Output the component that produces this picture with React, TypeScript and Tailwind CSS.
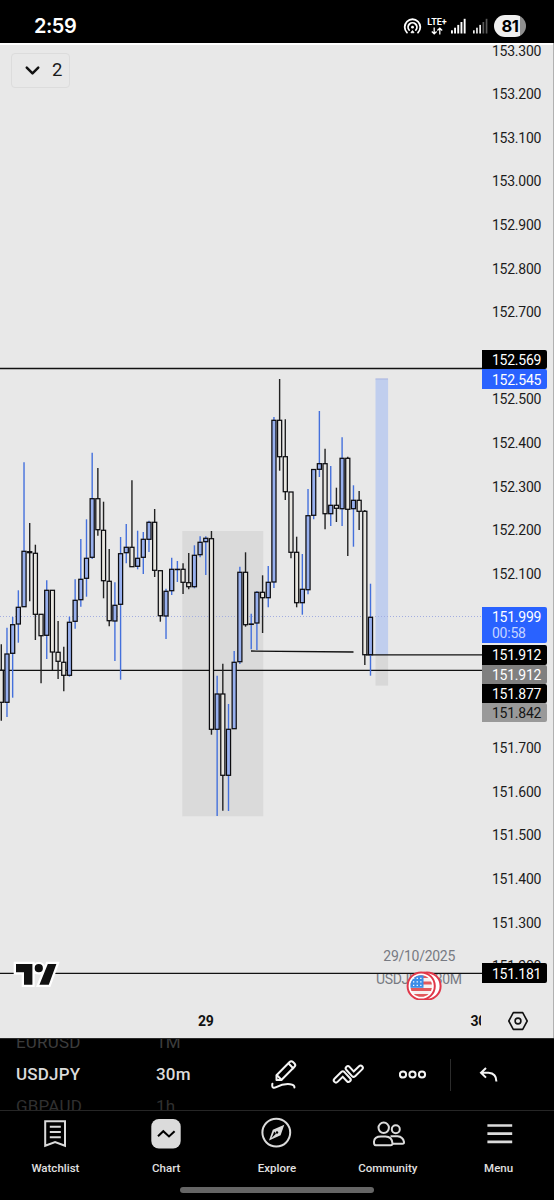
import { ChevronDown } from "lucide-react";

// [high, body top, body bottom, low, bullish]
const candles: [number, number, number, number, boolean][] = [
  [644.3, 670.3, 702.3, 720.7, false],
  [627.7, 654, 702.3, 717, true],
  [617, 624.7, 653.3, 697.7, true],
  [590.3, 607.3, 624, 642.7, true],
  [462.3, 551.3, 606.7, 606.7, true],
  [523, 551.7, 552.7, 601.3, false],
  [544.7, 553.3, 614.3, 640, false],
  [614.3, 614.3, 635.7, 683.3, false],
  [580.3, 590.3, 635.3, 659, true],
  [590.3, 590.3, 652, 670, false],
  [621, 652.3, 661.3, 679, false],
  [646.7, 662.3, 675.3, 691.3, false],
  [616.7, 622.3, 675.3, 676.7, true],
  [579.3, 600.3, 621.3, 628.7, true],
  [539, 579.3, 599.7, 606.7, true],
  [519.3, 558.3, 578.3, 596.7, true],
  [452.7, 498.7, 557.3, 559, true],
  [468, 498.7, 529.7, 535.7, false],
  [501.7, 530.3, 580.7, 598.3, false],
  [549, 581.3, 620.7, 626.3, false],
  [582.3, 605.3, 621, 661, true],
  [537, 553.7, 604.3, 679.7, true],
  [524, 547.3, 552.7, 563.3, true],
  [480.3, 547.3, 566.7, 566.7, false],
  [530.7, 558.3, 566.3, 569.3, true],
  [532, 539.3, 557.3, 574, true],
  [520.7, 522.3, 539.3, 552, true],
  [509, 522.3, 570.3, 577, false],
  [570.3, 570.7, 615.7, 621.7, false],
  [588.7, 591.3, 616, 639, true],
  [557.7, 569.3, 590.7, 595, true],
  [561, 569.3, 569.6, 582, true],
  [563.3, 569.3, 582.3, 594, false],
  [553, 582.7, 586.7, 589.3, false],
  [545.3, 555.3, 586.7, 588.3, true],
  [536.3, 542.3, 554.7, 557.3, true],
  [536.3, 538.3, 541.7, 575, true],
  [531, 538.7, 729.3, 734.7, false],
  [675.7, 694, 729.3, 816, true],
  [663.7, 694, 775.3, 810.7, false],
  [704, 729.3, 775.3, 811, true],
  [651, 662.3, 728.7, 728.7, true],
  [566.7, 572.3, 661.7, 664, true],
  [552.3, 572.3, 624.7, 626.7, false],
  [613.7, 624, 624.4, 649.3, true],
  [591, 592.3, 623, 650, true],
  [575.3, 592.3, 597.7, 633, false],
  [566, 582.3, 597.7, 607.3, true],
  [417, 420.3, 582, 588, true],
  [379, 420.3, 456.7, 470.7, false],
  [419.3, 456.7, 491.7, 500, false],
  [492, 492, 552.3, 558.3, false],
  [536.7, 552.3, 602.7, 607.3, false],
  [554, 589.3, 602.7, 614.7, true],
  [489, 515.7, 589.7, 594.3, true],
  [469, 469.5, 515.3, 519.3, true],
  [411, 463.7, 469.3, 477, true],
  [448.7, 463.7, 513.7, 529.3, false],
  [466, 505.3, 513.7, 526, true],
  [487.7, 505.3, 508.3, 522, false],
  [437.3, 458.3, 508.7, 526, true],
  [456.7, 458.3, 509.3, 556, false],
  [485.3, 500.3, 508.7, 546.7, true],
  [491, 500.3, 511.3, 530, false],
  [510, 511.3, 654.7, 665, false],
  [583.7, 617.3, 654.7, 675.7, true],
];

const prices = [
  "153.300", "153.200", "153.100", "153.000", "152.900", "152.800", "152.700", "",
  "152.500", "152.400", "152.300", "152.200", "152.100", "", "", "",
  "151.700", "151.600", "151.500", "151.400", "151.300", "151.200",
];

const tags = [
  { label: "152.569", style: "top-[307px] h-[19px] bg-black text-white" },
  { label: "152.545", style: "top-[326px] h-[20px] bg-[#2962ff] text-white" },
  { label: "151.912", style: "top-[602px] h-[19.5px] bg-black text-white" },
  { label: "151.912", style: "top-[621.5px] h-[19px] bg-[#808080] text-white" },
  { label: "151.877", style: "top-[640.5px] h-[19.5px] bg-black text-white" },
  { label: "151.842", style: "top-[660px] h-[19px] bg-[#999999] text-[#151515]" },
  { label: "151.181", style: "top-[920px] h-[20px] bg-black text-white" },
];

function StatusBar() {
  return (
    <header className="flex h-[43px] shrink-0 items-center bg-black pt-[9px] pr-[28px] pl-[34px] text-white">
      <span className="font-[Inter] text-[20px] font-semibold tracking-[-0.5px]">2:59</span>
      <svg className="ml-auto" width="19" height="18" viewBox="0 0 19 18" fill="none" stroke="white" strokeWidth="1.8" strokeLinecap="round">
        <path d="M4 15.6A7.8 7.8 0 1 1 15 15.6" />
        <path d="M6.1 13A4.4 4.4 0 1 1 12.9 13" />
        <circle cx="9.5" cy="10.2" r="1.4" fill="white" stroke="none" />
        <path d="M8.2 15.4L9.5 13.6L10.8 15.4Z" fill="white" strokeWidth="1" />
      </svg>
      <div className="ml-[5px] flex w-[20px] flex-col items-center">
        <span className="font-[Roboto] text-[9px] leading-[9px] font-bold">LTE+</span>
        <svg width="12" height="8" viewBox="0 0 12 8" fill="none" stroke="white" strokeWidth="1.3">
          <path d="M3.2 0.5V6.8M0.8 4.5L3.2 6.9L5.6 4.5M8.8 7.5V1.2M6.4 3.5L8.8 1.1L11.2 3.5" />
        </svg>
      </div>
      <svg className="ml-[4px]" width="15" height="16" viewBox="0 0 15 16" fill="white">
        <rect x="0" y="12.3" width="1.9" height="3.2" />
        <rect x="3.1" y="9.7" width="1.9" height="5.8" />
        <rect x="6.3" y="6.9" width="1.9" height="8.6" />
        <rect x="9.5" y="4" width="1.9" height="11.5" />
        <rect x="12.7" y="0.8" width="1.9" height="14.7" />
      </svg>
      <svg className="ml-[7px]" width="15" height="16" viewBox="0 0 15 16" fill="#eee">
        <rect x="0" y="12.3" width="1.7" height="3.2" />
        <rect x="3.1" y="9.7" width="1.7" height="5.8" />
        <rect x="6.3" y="6.9" width="1.7" height="8.6" />
        <rect x="9.5" y="4" width="1.7" height="11.5" fill="#5a5a5a" />
        <rect x="12.7" y="0.8" width="1.7" height="14.7" fill="#5a5a5a" />
      </svg>
      <div className="ml-[6px] flex h-[22px] w-[32px] items-center justify-center rounded-full bg-linear-to-r from-[#f0f0f0] from-81% to-[#8f8f8f] to-81%">
        <span className="font-[Inter] text-[16.5px] font-bold tracking-[-0.5px] text-black">81</span>
      </div>
    </header>
  );
}

function CandleChart() {
  return (
    <svg className="shrink-0" width="482" height="957" viewBox="0 43 482 957">
      {/* session ranges */}
      <rect x="182.3" y="531" width="81" height="285.3" fill="#dadada" />
      <rect x="375.5" y="378.8" width="12.6" height="276" fill="#c0ceee" />
      <rect x="375.5" y="654.8" width="12.6" height="30.8" fill="#d8d8d8" />
      <path d="M375.5 379H388" stroke="#aab5df" />

      <path d="M0 616.5H482" stroke="#a3ade0" strokeWidth="1" strokeDasharray="1 2" />
      <g stroke="#111" strokeWidth="1.3">
        <path d="M0 368.5H482M0 670.3H482M366 654.9H482" />
        <path d="M251 651L353.5 652" />
      </g>

      {candles.map(([high, top, bottom, low, up], i) => {
        const x = 1.3 + i * 5.68;
        return (
          <g key={i}>
            <path d={`M${x} ${high}V${low}`} stroke={up ? "#4470dc" : "#222"} strokeWidth="1.4" />
            <rect
              x={x - 2.05}
              y={top}
              width="4.1"
              height={bottom - top}
              fill={up ? "#98b0ee" : "#e8e6e0"}
              stroke="#0c0c10"
              strokeWidth="1.25"
            />
          </g>
        );
      })}

      {/* symbol caption */}
      <g fill="#777a82" fontFamily="Roboto, sans-serif" fontSize="14">
        <text x="383.3" y="960.5" textLength="72">29/10/2025</text>
        <text x="376" y="983.5" textLength="86">USDJPY · 30M</text>
      </g>
      <path d="M0 973.3H482" stroke="#111" strokeWidth="1.3" />

      {/* event flags */}
      <circle cx="427" cy="986" r="13.6" fill="white" stroke="#e0384a" strokeWidth="2" />
      <circle cx="421.2" cy="986" r="13.6" fill="white" stroke="#e0384a" strokeWidth="2" />
      <clipPath id="flag">
        <circle cx="421.2" cy="986" r="10.8" />
      </clipPath>
      <g clipPath="url(#flag)">
        <rect x="410" y="975" width="23" height="23" fill="#f6f1f1" />
        <path d="M410 976.5H433M410 983H433M410 989.5H433M410 995.5H433" stroke="#e2585c" strokeWidth="3.1" />
        <rect x="410" y="975" width="13.5" height="12.8" fill="#3a8de8" />
        <path d="M413 978.3H423M413 981.8H423M413 985.3H423" stroke="white" strokeWidth="1.3" strokeDasharray="1.3 2.3" />
      </g>

      {/* logo */}
      <path
        d="M16 964H32.4V984.7H24V972.3H16ZM34.7 968.2A4.1 4.1 0 1 0 42.9 968.2A4.1 4.1 0 1 0 34.7 968.2ZM47.8 964H56.4L48.8 984.7H39.4Z"
        fill="#111"
        stroke="white"
        strokeWidth="4.6"
        paintOrder="stroke"
      />
    </svg>
  );
}

function PriceAxis() {
  return (
    <div className="relative h-[957px] w-[71px] overflow-hidden text-[14px] tracking-[-0.25px] text-[#1c1c1c]">
      <div className="-mt-[13.6px] flex flex-col">
        {prices.map((price, i) => (
          <div key={i} className="flex h-[43.6px] items-center pl-[10px]">
            {price}
          </div>
        ))}
      </div>
      {tags.map((tag, i) => (
        <div key={i} className={`absolute left-0 flex w-[65px] items-center rounded-r-[2px] pt-[2px] pl-[10px] ${tag.style}`}>
          {tag.label}
        </div>
      ))}
      <div className="absolute top-[564px] left-0 flex h-[35.5px] w-[65px] flex-col justify-center rounded-r-[2px] bg-[#2962ff] pt-[1px] pl-[10px] leading-[16px] text-white">
        <span>151.999</span>
        <span className="text-[#c5d4ff]">00:58</span>
      </div>
    </div>
  );
}

function TimeAxis() {
  return (
    <div className="flex h-[38px] items-center pt-[4px] text-[14px] font-bold tracking-[-0.25px] text-[#111]">
      <div className="flex w-[481px] overflow-hidden">
        <span className="ml-[198px]">29</span>
        <span className="ml-[257px]">30</span>
      </div>
      <svg className="ml-[27px]" width="20" height="20" viewBox="0 0 20 20" fill="none" stroke="#111" strokeWidth="1.6" strokeLinejoin="round">
        <path d="M5.3 1.6H14.7L19.2 10L14.7 18.4H5.3L0.8 10Z" />
        <circle cx="10" cy="10" r="2.9" />
      </svg>
    </div>
  );
}

function Picker({ items, className }: { items: string[]; className: string }) {
  return (
    <div className={`flex h-full flex-col justify-center overflow-hidden pb-[1px] text-[17px] tracking-[0.2px] ${className}`}>
      <span className="h-8 shrink-0 leading-8 text-[#3c3c3c]">{items[0]}</span>
      <span className="h-8 shrink-0 leading-8 font-medium text-[#dbdbdb]">{items[1]}</span>
      <span className="h-8 shrink-0 leading-8 text-[#303030]">{items[2]}</span>
    </div>
  );
}

function Toolbar() {
  return (
    <div className="flex h-[72px] shrink-0 items-center overflow-hidden border-t border-[#2a2a2a] bg-black">
      <Picker items={["EURUSD", "USDJPY", "GBPAUD"]} className="ml-4 w-[140px]" />
      <Picker items={["1M", "30m", "1h"]} className="w-[115px]" />
      <svg width="28" height="32" viewBox="0 0 28 32" fill="none" stroke="#f4f4f4" strokeWidth="2" strokeLinejoin="round" strokeLinecap="round">
        <path d="M5.5 16.3L18.6 3Q20.3 1.3 22 3L23.5 4.5Q25.1 6.2 23.5 7.8L10.4 21H5.5Z" />
        <path d="M17.6 4.5L22.2 9.2M5.9 16.3L10.4 20.8" />
        <path d="M1.4 24.8C0.6 28.5 2.5 29.6 5.2 28.2C10 25.7 14.5 24.7 19 25.2C22 25.6 23.6 26.8 23.4 28.4" />
      </svg>
      <svg className="ml-[33px]" width="34" height="22" viewBox="0 0 34 22" fill="none" strokeLinejoin="round" strokeLinecap="round">
        <path d="M4 16.3L10.8 9.6L16.5 15.7" stroke="#f4f4f4" strokeWidth="6.4" />
        <path d="M4 16.3L10.8 9.6L16.5 15.7" stroke="black" strokeWidth="2.4" />
        <path d="M15.9 4.3L21.6 10.6L28.6 3.8" stroke="#f4f4f4" strokeWidth="6.4" />
        <path d="M15.9 4.3L21.6 10.6L28.6 3.8" stroke="black" strokeWidth="2.4" />
      </svg>
      <svg className="ml-[33px]" width="28" height="10" viewBox="0 0 28 10" fill="none" stroke="#f4f4f4" strokeWidth="2">
        <circle cx="4" cy="4.5" r="3.1" />
        <circle cx="13.5" cy="4.5" r="3.1" />
        <circle cx="23" cy="4.5" r="3.1" />
      </svg>
      <div className="ml-[23px] h-[32px] w-px bg-[#2c2c2c]" />
      <svg className="ml-[28px]" width="20" height="16" viewBox="0 0 20 16" fill="none" stroke="#f4f4f4" strokeWidth="2">
        <path d="M7 1L2 5.8L7 10.6M2.5 5.8H9.5Q17.4 6.3 17.4 14.5" />
      </svg>
    </div>
  );
}

const tabs = [
  {
    label: "Watchlist",
    icon: (
      <>
        <path d="M5.2 3.2H25V27.8L15.1 24L5.2 27.8Z" />
        <path d="M9.8 8.8H20.8M9.8 14H20.8M9.8 19.2H20.8" />
      </>
    ),
  },
  {
    label: "Chart",
    icon: (
      <>
        <rect x="0.3" y="1" width="29.4" height="29.4" rx="7.5" fill="#dbdbdb" stroke="none" />
        <path d="M7 18.3L12.3 13.2L18 18.5L23.6 13.2" stroke="black" />
      </>
    ),
  },
  {
    label: "Explore",
    icon: (
      <>
        <circle cx="14.3" cy="14.6" r="13.9" />
        <path d="M22.3 6.8L18.6 17.3L7 22.6L10.8 11.8Z" fill="#dbdbdb" stroke="none" />
        <path d="M12.2 13.6L9.6 20L14 15.8Z" fill="black" stroke="none" />
        <circle cx="15" cy="14.5" r="1.2" fill="black" stroke="none" />
      </>
    ),
  },
  {
    label: "Community",
    icon: (
      <>
        <circle cx="10.7" cy="9.8" r="5.2" />
        <circle cx="22.8" cy="11.2" r="4" />
        <path d="M1 23.5Q1.5 18.5 8 18.5H12.5Q19 18.5 19.5 25.5Q19.4 27.2 17.7 27.2H2.7Q0.8 27.2 1 23.5Z" strokeLinejoin="round" />
        <path d="M17.5 18.3H24.5Q30 18.8 31 24Q31.2 25.8 29.5 25.8H19.6" />
      </>
    ),
  },
  {
    label: "Menu",
    icon: <path d="M3.4 7.5H28.2M3.4 15.7H28.2M3.4 23.9H28.2" strokeWidth="2.7" />,
  },
];

function TabBar() {
  return (
    <nav className="relative grid h-[90px] shrink-0 grid-cols-5 border-t border-[#262626] bg-black">
      {tabs.map((tab) => (
        <div key={tab.label} className="flex flex-col items-center pt-[7px]">
          <svg className="overflow-visible" width="30" height="32" viewBox="0 0 30 32" fill="none" stroke="#dbdbdb" strokeWidth="2">
            {tab.icon}
          </svg>
          <span className="mt-[9.5px] text-[11.5px] leading-[17px] font-medium text-[#e0e0e0]">{tab.label}</span>
        </div>
      ))}
      <div className="absolute bottom-[7px] left-[180px] h-[6px] w-[193.5px] rounded-full bg-[#666]" />
    </nav>
  );
}

export default function App() {
  return (
    <div className="flex h-[1200px] w-[554px] flex-col overflow-hidden bg-black font-[Roboto,sans-serif]">
      <StatusBar />
      <main className="relative h-[995px] shrink-0 border-r border-[#b0b0b0] bg-[#e8e8e8]">
        <div className="flex">
          <CandleChart />
          <PriceAxis />
        </div>
        <TimeAxis />
        <div className="absolute inset-x-0 top-0 h-[1.5px] bg-white" />
        <button className="absolute top-[10px] left-[11px] flex h-[35px] w-[59px] items-center rounded-[4px] border border-[#dcdcdc] pl-[9px] text-[18.5px] text-[#1a1a1a]">
          <ChevronDown size={23} strokeWidth={2.6} color="#111" />
          <span className="ml-[8px]">2</span>
        </button>
      </main>
      <Toolbar />
      <TabBar />
    </div>
  );
}
